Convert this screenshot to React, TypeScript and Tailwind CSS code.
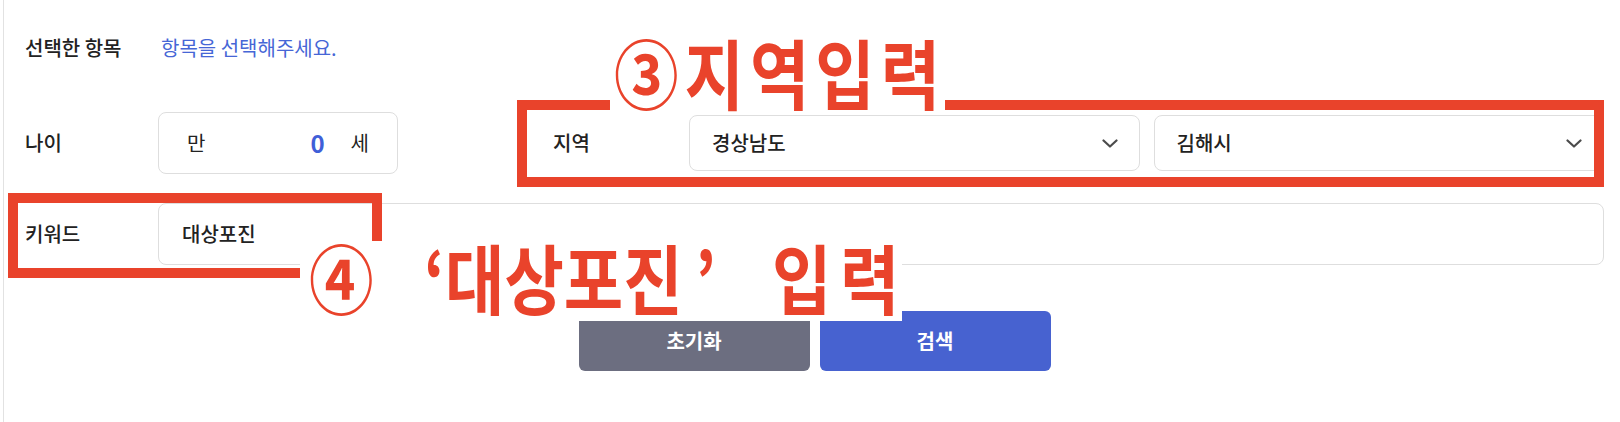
import React from "react";

const FONT = { fontFamily: '"Noto Sans CJK KR", "Noto Sans", sans-serif' };

function Chevron() {
    return (
        <svg width="16" height="9" viewBox="0 0 16 9" fill="none">
            <path
                d="M1.5 1.5 L8 7.5 L14.5 1.5"
                stroke="#4b4b4b"
                strokeWidth="2.2"
                strokeLinecap="round"
                strokeLinejoin="round"
            />
        </svg>
    );
}

function SelectBox({ value }: { value: string }) {
    return (
        <div className="flex h-[56px] flex-1 items-center justify-between rounded-[8px] border border-[#dedede] bg-white pl-[22px] pr-[21px]">
            <span className="text-[20px] font-medium text-[#222]">{value}</span>
            <Chevron />
        </div>
    );
}

// one piece of the red callout text, narrowed so it matches the screenshot
function Mark({ text, width, spaced }: { text: string; width: string; spaced?: boolean }) {
    return (
        <span className={`inline-block ${width}`}>
            <span
                className={`inline-block origin-left scale-x-[0.85] whitespace-nowrap ${spaced ? "tracking-[10px]" : ""}`}
            >
                {text}
            </span>
        </span>
    );
}

export default function App() {
    return (
        <div className="relative h-[422px] w-full overflow-hidden bg-white" style={FONT}>
            <div className="ml-[3px] h-full border-l border-[#e2e2e2] pl-[21px] pr-[16px] pt-[28px]">
                {/* 선택한 항목 */}
                <div className="flex h-[40px] items-center">
                    <span className="w-[133px] text-[20px] font-medium text-[#222]">선택한 항목</span>
                    <span className="ml-[3px] text-[20px] text-[#4666d6]">항목을 선택해주세요.</span>
                </div>

                {/* 나이 / 지역 */}
                <div className="mt-[44px] flex h-[62px] items-center">
                    <span className="w-[133px] text-[20px] font-medium text-[#222]">나이</span>
                    <div className="flex h-[62px] w-[240px] items-center rounded-[8px] border border-[#dedede] px-[28px]">
                        <span className="text-[20px] text-[#222]">만</span>
                        <span className="flex-1 text-right text-[24px] font-bold text-[#3f5fd8]">0</span>
                        <span className="ml-[26px] text-[20px] text-[#222]">세</span>
                    </div>
                    <span className="ml-[155px] w-[136px] text-[20px] font-medium text-[#222]">지역</span>
                    <div className="flex flex-1 gap-[14px]">
                        <SelectBox value="경상남도" />
                        <SelectBox value="김해시" />
                    </div>
                </div>

                {/* 키워드 */}
                <div className="mt-[29px] flex h-[62px] items-center">
                    <span className="w-[133px] text-[20px] font-medium text-[#222]">키워드</span>
                    <div className="flex h-full flex-1 items-center rounded-[8px] border border-[#dedede] px-[23px]">
                        <span className="text-[20px] font-medium text-[#222]">대상포진</span>
                    </div>
                </div>

                {/* 버튼 */}
                <div className="mt-[46px] flex justify-center gap-[10px]">
                    <button className="h-[60px] w-[231px] rounded-[6px] bg-[#6c6e80] text-[20px] font-bold text-white">
                        초기화
                    </button>
                    <button className="h-[60px] w-[231px] rounded-[6px] bg-[#4762d0] text-[20px] font-bold text-white">
                        검색
                    </button>
                </div>
            </div>

            {/* ③ 지역입력 */}
            <div className="pointer-events-none absolute left-[517px] top-[100px] h-[87px] w-[1087px] border-[10px] border-[#e9432b]" />
            <div className="pointer-events-none absolute left-[610px] top-[30px] h-[82px] w-[335px] bg-white pl-[4px] pt-[3px] text-[76px] font-bold leading-none text-[#e9432b]">
                <span className="inline-block origin-left scale-x-[0.85] whitespace-nowrap tracking-[7px]">③지역입력</span>
            </div>

            {/* ④ 키워드 */}
            <div className="pointer-events-none absolute left-[8px] top-[193px] h-[85px] w-[374px] border-[10px] border-[#e9432b]" />
            <div className="pointer-events-none absolute left-[300px] top-[241px] h-[80px] w-[602px] bg-white pl-[9px] text-[76px] font-bold leading-none text-[#e9432b]">
                <div className="-mt-[3px] flex">
                    <Mark text="④" width="w-[115px]" />
                    <Mark text="‘" width="w-[21px]" />
                    <Mark text="대상포진" width="w-[250px]" />
                    <Mark text="’" width="w-[77px]" />
                    <Mark text="입력" width="w-[120px]" spaced />
                </div>
            </div>
        </div>
    );
}
